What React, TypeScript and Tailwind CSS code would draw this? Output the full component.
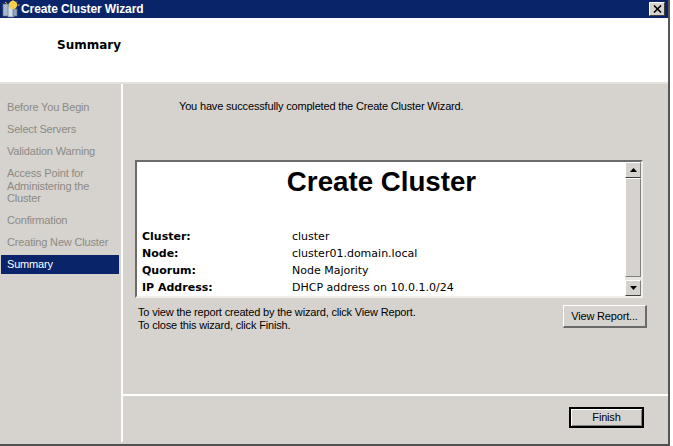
import * as React from "react";

const steps = [
  { label: "Before You Begin", h: "h-[22px]" },
  { label: "Select Servers", h: "h-[22px]" },
  { label: "Validation Warning", h: "h-[22px]" },
  { label: "Access Point for Administering the Cluster", h: "h-[47px]" },
  { label: "Confirmation", h: "h-[22px]" },
  { label: "Creating New Cluster", h: "h-[19px]" },
];

const details = [
  ["Cluster:", "cluster"],
  ["Node:", "cluster01.domain.local"],
  ["Quorum:", "Node Majority"],
  ["IP Address:", "DHCP address on 10.0.1.0/24"],
];

function ScrollButton({ up }: { up?: boolean }) {
  return (
    <div className="flex h-[16px] w-[16px] shrink-0 items-center justify-center border-t border-r border-b border-l border-t-white border-r-[#808080] border-b-[#404040] border-l-white bg-[#d6d3ce]">
      <svg width="7" height="4" viewBox="0 0 7 4">
        <path d={up ? "M3.5 0L7 4H0z" : "M0 0H7L3.5 4z"} fill="#000" />
      </svg>
    </div>
  );
}

function ClusterIcon() {
  return (
    <svg width="18" height="18" viewBox="0 0 18 18" className="shrink-0">
      <rect x="1" y="4" width="6" height="12" fill="#a9bbd3" stroke="#5d6f8a" strokeWidth="0.7" />
      <rect x="6" y="6" width="6" height="11" fill="#d2dbe8" stroke="#66768f" strokeWidth="0.7" />
      <rect x="11" y="9" width="4" height="7" fill="#93a6c2" stroke="#5d6f8a" strokeWidth="0.7" />
      <circle cx="11" cy="5" r="4.2" fill="#f7cf4f" />
      <path d="M3 2l2 1.5M11 0v1M15.500 5h2M15 1.500l-1 1" stroke="#eeb93f" strokeWidth="1" />
    </svg>
  );
}

export default function App() {
  return (
    <div className="h-[446px] w-[673px] overflow-hidden bg-white font-['Liberation_Sans',sans-serif] text-[11px] tracking-[-0.17px] text-black">
      <div className="flex h-[446px] w-[670px] flex-col border-r-2 border-b-2 border-r-[#555555] border-b-[#505050] bg-[#d6d3ce]">
        <div className="flex h-[18px] shrink-0 items-center justify-between bg-[#0a246a] pr-[3px] pl-[2px]">
          <div className="flex items-center gap-[1px]">
            <ClusterIcon />
            <span className="text-[12px] leading-none font-bold tracking-[-0.1px] text-white">Create Cluster Wizard</span>
          </div>
          <div className="flex h-[14px] w-[16px] items-center justify-center border-t border-r border-b border-l border-t-white border-r-[#404040] border-b-[#404040] border-l-white bg-[#d6d3ce]">
            <svg width="9" height="8" viewBox="0 0 9 8">
              <path d="M1 0.5L8 7.5M8 0.5L1 7.5" stroke="#000" strokeWidth="1.6" />
            </svg>
          </div>
        </div>
        <div className="flex h-[66px] shrink-0 items-center border-b-2 border-b-[#e4e2dc] bg-white pb-[10px] pl-[57px]">
          <span className="font-['DejaVu_Sans',sans-serif] text-[12px] font-bold tracking-normal">Summary</span>
        </div>
        <div className="flex min-h-0 flex-1">
          <div className="flex w-[121px] shrink-0 flex-col pt-[17px] pl-[1px]">
            {steps.map((s) => (
              <div key={s.label} className={`${s.h} pr-[2px] pl-[6px] leading-[12.5px] text-[#8c8a84]`}>
                {s.label}
              </div>
            ))}
            <div className="flex h-[19px] w-[118px] items-center bg-[#0a246a] pl-[6px] text-white">Summary</div>
          </div>
          <div className="mb-[2px] flex min-w-0 flex-1 flex-col border-l-2 border-l-white">
            <div className="flex-1">
              <p className="pt-[16px] pl-[56px] leading-[13px]">You have successfully completed the Create Cluster Wizard.</p>
              <div className="mt-[47px] ml-[12px] flex h-[138px] w-[508px] border-t-2 border-r-2 border-b-2 border-l-2 border-t-[#6b6b6b] border-r-[#f0eee8] border-b-[#f0eee8] border-l-[#6b6b6b]">
                <div className="flex-1 bg-white px-[5px] font-['DejaVu_Sans',sans-serif] text-[11px] tracking-normal">
                  <h1 className="pt-[4px] pl-[1px] text-center font-['Liberation_Sans',sans-serif] text-[27.7px] leading-[31px] font-bold">
                    Create Cluster
                  </h1>
                  <div className="mt-[32px]">
                    {details.map(([k, v]) => (
                      <div key={k} className="flex h-[17px] items-center">
                        <span className="w-[150px] font-bold">{k}</span>
                        <span>{v}</span>
                      </div>
                    ))}
                  </div>
                </div>
                <div className="flex w-[16px] flex-col bg-[#e8e6e1]">
                  <ScrollButton up />
                  <div className="mb-[3px] flex-1 border-t border-r border-b border-l border-t-white border-r-[#808080] border-b-[#808080] border-l-white bg-[#d6d3ce]" />
                  <ScrollButton />
                </div>
              </div>
              <div className="mt-[6px] ml-[15px] flex w-[509px] items-start justify-between">
                <p className="pt-[2px] leading-[13px]">
                  To view the report created by the wizard, click View Report.
                  <br />
                  To close this wizard, click Finish.
                </p>
                <button className="mt-[1px] h-[23px] w-[84px] border-t border-r-2 border-b-2 border-l border-t-white border-r-[#6a6a6a] border-b-[#6a6a6a] border-l-white bg-[#d6d3ce]">
                  View Report...
                </button>
              </div>
            </div>
            <div className="flex h-[48px] shrink-0 items-start justify-end border-t-2 border-t-white pt-[11px] pr-[24px]">
              <button className="h-[21px] w-[75px] border-2 border-black bg-[#d6d3ce] shadow-[inset_1px_1px_0_#ffffff,inset_-1px_-1px_0_#808080]">
                Finish
              </button>
            </div>
          </div>
        </div>
      </div>
    </div>
  );
}
